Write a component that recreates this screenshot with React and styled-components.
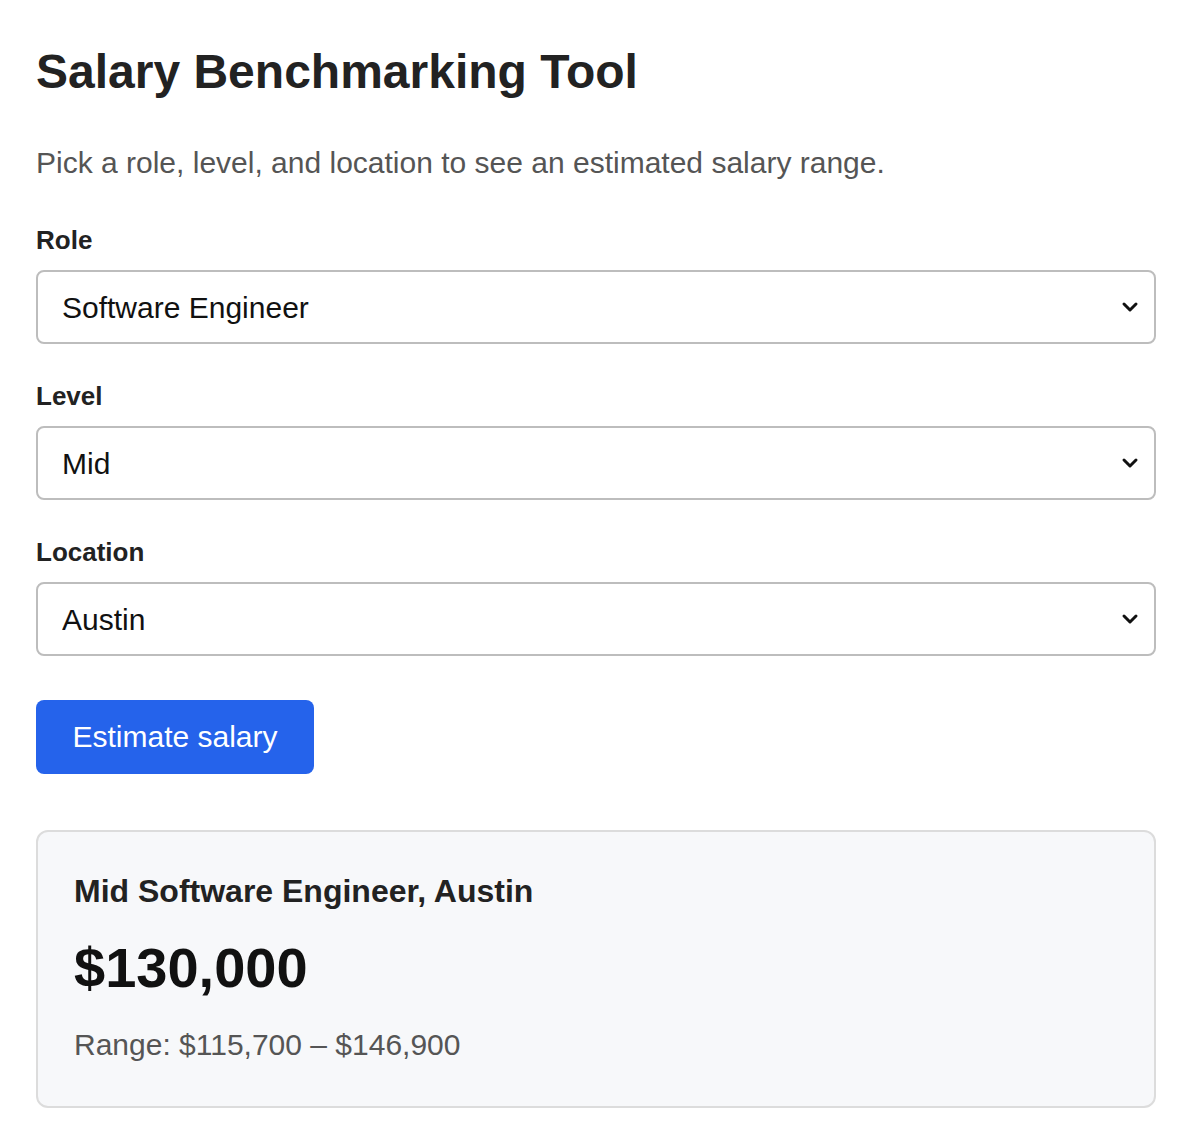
import React, { useState } from 'react';
import styled, { createGlobalStyle } from 'styled-components';

const Global = createGlobalStyle`
  body {
    margin: 0;
    font-family: "Liberation Sans", Arial, sans-serif;
    color: #222;
    background: #fff;
  }
`;

const Page = styled.div`
  width: 1120px;
  padding: 44px 36px 36px;
`;

const Title = styled.h1`
  margin: 0;
  font-size: 48px;
  line-height: 56px;
  font-weight: 700;
  color: #222;
`;

const Subtitle = styled.p`
  margin: 45px 0 0;
  font-size: 30px;
  line-height: 36px;
  color: #555;
`;

const Field = styled.div`
  display: flex;
  flex-direction: column;
  gap: 14px;
  margin-top: ${p => p.$first ? '43px' : '36px'};
`;

const Label = styled.label`
  font-size: 26px;
  line-height: 32px;
  font-weight: 700;
  color: #222;
`;

const SelectWrap = styled.div`
  position: relative;
  svg {
    position: absolute;
    right: 16px;
    top: 50%;
    transform: translateY(-50%);
    pointer-events: none;
  }
`;

const Select = styled.select`
  appearance: none;
  width: 100%;
  height: 74px;
  box-sizing: border-box;
  border: 2px solid #bdbdbd;
  border-radius: 8px;
  background: #fff;
  padding: 0 24px;
  font-family: inherit;
  font-size: 30px;
  color: #111;
`;

const Button = styled.button`
  margin-top: 44px;
  height: 74px;
  width: 278px;
  border: none;
  border-radius: 8px;
  background: #2563eb;
  color: #fff;
  font-family: inherit;
  font-size: 30px;
  cursor: pointer;
`;

const Card = styled.div`
  margin-top: 56px;
  box-sizing: border-box;
  height: 278px;
  border: 2px solid #dcdcdc;
  border-radius: 12px;
  background: #f7f8fa;
  padding: 40px 36px;
`;

const CardTitle = styled.h2`
  margin: 0;
  font-size: 32px;
  line-height: 38px;
  font-weight: 700;
  color: #222;
`;

const Amount = styled.div`
  margin-top: 26px;
  font-size: 56px;
  line-height: 64px;
  font-weight: 700;
  color: #111;
`;

const Range = styled.div`
  margin-top: 27px;
  font-size: 30px;
  line-height: 36px;
  color: #555;
`;

const Chevron = () => (
  <svg width="20" height="20" viewBox="0 0 20 20" fill="none">
    <path d="M4 7l6 6 6-6" stroke="#111" strokeWidth="3" strokeLinecap="round" strokeLinejoin="round" />
  </svg>
);

function Dropdown({ label, value, options, first, onChange }) {
  return (
    <Field $first={first}>
      <Label>{label}</Label>
      <SelectWrap>
        <Select value={value} onChange={e => onChange(e.target.value)}>
          {options.map(o => <option key={o}>{o}</option>)}
        </Select>
        <Chevron />
      </SelectWrap>
    </Field>
  );
}

export default function App() {
  const [role, setRole] = useState('Software Engineer');
  const [level, setLevel] = useState('Mid');
  const [loc, setLoc] = useState('Austin');
  return (
    <Page>
      <Global />
      <Title>Salary Benchmarking Tool</Title>
      <Subtitle>Pick a role, level, and location to see an estimated salary range.</Subtitle>
      <Dropdown first label="Role" value={role} onChange={setRole}
        options={['Software Engineer', 'Product Manager', 'Data Scientist', 'Designer']} />
      <Dropdown label="Level" value={level} onChange={setLevel}
        options={['Junior', 'Mid', 'Senior', 'Staff']} />
      <Dropdown label="Location" value={loc} onChange={setLoc}
        options={['Austin', 'New York', 'San Francisco', 'Remote']} />
      <Button>Estimate salary</Button>
      <Card>
        <CardTitle>Mid Software Engineer, Austin</CardTitle>
        <Amount>$130,000</Amount>
        <Range>Range: $115,700 – $146,900</Range>
      </Card>
    </Page>
  );
}
